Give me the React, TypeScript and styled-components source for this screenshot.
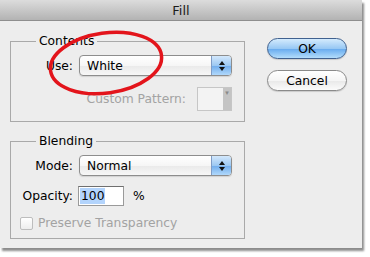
import React from "react";
import styled, { createGlobalStyle } from "styled-components";

const Global = createGlobalStyle`
  html, body { margin: 0; padding: 0; background: #fff; }
  body { font-family: "DejaVu Sans", "Liberation Sans", sans-serif; }
`;

const Page = styled.div`
  width: 370px;
  height: 257px;
  background: #fff;
  overflow: hidden;
`;

const Window = styled.div`
  position: relative;
  width: 362px;
  height: 248px;
  background: #ededed;
  box-shadow: 2px 3px 2px rgba(0, 0, 0, 0.45);
  display: flex;
  flex-direction: column;
`;

const TitleBar = styled.div`
  height: 20px;
  border-bottom: 1px solid #8e8e8e;
  background: linear-gradient(#dcdcdc, #b3b3b3);
  display: flex;
  align-items: center;
  justify-content: center;
  font-size: 13px;
  color: #1c1c1c;
`;

const Body = styled.div`
  display: flex;
  flex: 1;
`;

const LeftCol = styled.div`
  padding: 20px 0 0 10px;
  display: flex;
  flex-direction: column;
  gap: 19px;
`;

const Group = styled.div<{ $bottom: number }>`
  width: 235px;
  box-sizing: border-box;
  border: 1px solid #a9a9a9;
  padding: 0 12px ${(p) => p.$bottom}px 9px;
`;

const GroupTitle = styled.div`
  margin: -8px 0 0 16px;
  padding: 0 3px;
  width: fit-content;
  background: #ededed;
  line-height: 14px;
  font-size: 12.3px;
  color: #000;
`;

const Form = styled.div<{ $gap: number }>`
  margin-top: 7px;
  display: grid;
  grid-template-columns: 53px 153px;
  column-gap: 6px;
  row-gap: ${(p) => p.$gap}px;
  align-items: center;
`;

const Label = styled.span<{ $disabled?: boolean }>`
  justify-self: end;
  font-size: 12.3px;
  white-space: nowrap;
  color: ${(p) => (p.$disabled ? "#a3a3a3" : "#000")};
`;

const Select = styled.div`
  height: 21px;
  box-sizing: border-box;
  border: 1px solid #8d8d8d;
  border-radius: 4px;
  background: linear-gradient(#ffffff, #f6f6f6 50%, #e9e9e9 51%, #f7f7f7);
  display: flex;
  align-items: center;
  overflow: hidden;
  box-shadow: 0 1px 1px rgba(0, 0, 0, 0.12);
`;

const SelectText = styled.span`
  flex: 1;
  padding-left: 7px;
  font-size: 12.3px;
  color: #000;
`;

const Stepper = styled.span`
  width: 19px;
  align-self: stretch;
  border-left: 1px solid #7f9cc6;
  background: linear-gradient(#d3e8fc, #9cc8f2 50%, #70acec 51%, #b0d8fb);
  display: flex;
  flex-direction: column;
  align-items: center;
  justify-content: center;
  gap: 2px;
`;

const SpanRow = styled.div<{ $justify: string; $gap: number }>`
  grid-column: 1 / span 2;
  display: flex;
  align-items: center;
  justify-content: ${(p) => p.$justify};
  gap: ${(p) => p.$gap}px;
`;

const Swatch = styled.div`
  width: 35px;
  height: 24px;
  box-sizing: border-box;
  border: 1px solid #c6c6c6;
  background: #f3f3f3;
  display: flex;
  justify-content: flex-end;
`;

const SwatchArrow = styled.div`
  width: 8px;
  background: #c4c4c4;
  color: #8a8a8a;
  font-size: 7px;
  line-height: 10px;
  text-align: center;
`;

const OpacityRow = styled.div`
  display: flex;
  align-items: center;
  gap: 9px;
  margin-left: -1px;
`;

const TextField = styled.div`
  width: 46px;
  height: 20px;
  box-sizing: border-box;
  border: 1px solid #9a9a9a;
  border-top-color: #6f6f6f;
  background: #fff;
  padding-left: 1px;
  display: flex;
  align-items: center;
`;

const Selected = styled.span`
  background: #b3d4fc;
  font-size: 12.3px;
  line-height: 16px;
  padding: 0 1px;
  color: #000;
`;

const Percent = styled.span`
  font-size: 12.3px;
  color: #000;
`;

const Checkbox = styled.span`
  width: 13px;
  height: 13px;
  box-sizing: border-box;
  border: 1px solid #bdbdbd;
  border-radius: 2px;
  background: linear-gradient(#ffffff, #ededed);
`;

const RightCol = styled.div`
  margin-left: 22px;
  padding-top: 17px;
  display: flex;
  flex-direction: column;
  gap: 11px;
`;

const Button = styled.button<{ $primary?: boolean }>`
  width: 80px;
  height: 21px;
  padding: 0;
  border-radius: 11px;
  font-family: inherit;
  font-size: 12.3px;
  color: #000;
  border: 1px solid ${(p) => (p.$primary ? "#40618f" : "#8a8a8a")};
  background: ${(p) =>
    p.$primary
      ? "linear-gradient(#d4ebfd, #98c8f4 50%, #65a9ee 51%, #b3ddfb)"
      : "linear-gradient(#ffffff, #f5f5f5 50%, #e8e8e8 51%, #fbfbfb)"};
  box-shadow: 0 1px 1px rgba(0, 0, 0, 0.15);
`;

const Overlay = styled.svg`
  position: absolute;
  left: 0;
  top: 0;
  pointer-events: none;
`;

const Arrows = () => (
  <>
    <svg width="6" height="4" viewBox="0 0 6 4">
      <path d="M3 0 L6 4 L0 4 Z" fill="#111" />
    </svg>
    <svg width="6" height="4" viewBox="0 0 6 4">
      <path d="M0 0 L6 0 L3 4 Z" fill="#111" />
    </svg>
  </>
);

export default function App() {
  return (
    <Page>
      <Global />
      <Window>
        <TitleBar>Fill</TitleBar>
        <Body>
          <LeftCol>
            <Group $bottom={10}>
              <GroupTitle>Contents</GroupTitle>
              <Form $gap={11}>
                <Label>Use:</Label>
                <Select>
                  <SelectText>White</SelectText>
                  <Stepper>
                    <Arrows />
                  </Stepper>
                </Select>
                <SpanRow $justify="flex-end" $gap={11}>
                  <Label $disabled>Custom Pattern:</Label>
                  <Swatch>
                    <SwatchArrow>▾</SwatchArrow>
                  </Swatch>
                </SpanRow>
              </Form>
            </Group>
            <Group $bottom={8}>
              <GroupTitle>Blending</GroupTitle>
              <Form $gap={10}>
                <Label>Mode:</Label>
                <Select>
                  <SelectText>Normal</SelectText>
                  <Stepper>
                    <Arrows />
                  </Stepper>
                </Select>
                <Label>Opacity:</Label>
                <OpacityRow>
                  <TextField>
                    <Selected>100</Selected>
                  </TextField>
                  <Percent>%</Percent>
                </OpacityRow>
                <SpanRow $justify="flex-start" $gap={5}>
                  <Checkbox />
                  <Label $disabled>Preserve Transparency</Label>
                </SpanRow>
              </Form>
            </Group>
          </LeftCol>
          <RightCol>
            <Button $primary>OK</Button>
            <Button>Cancel</Button>
          </RightCol>
        </Body>
        <Overlay width="362" height="248" viewBox="0 0 362 248">
          <ellipse
            cx="106"
            cy="63"
            rx="56"
            ry="30"
            transform="rotate(-8 106 63)"
            fill="none"
            stroke="#e3141b"
            strokeWidth="3.5"
          />
        </Overlay>
      </Window>
    </Page>
  );
}
